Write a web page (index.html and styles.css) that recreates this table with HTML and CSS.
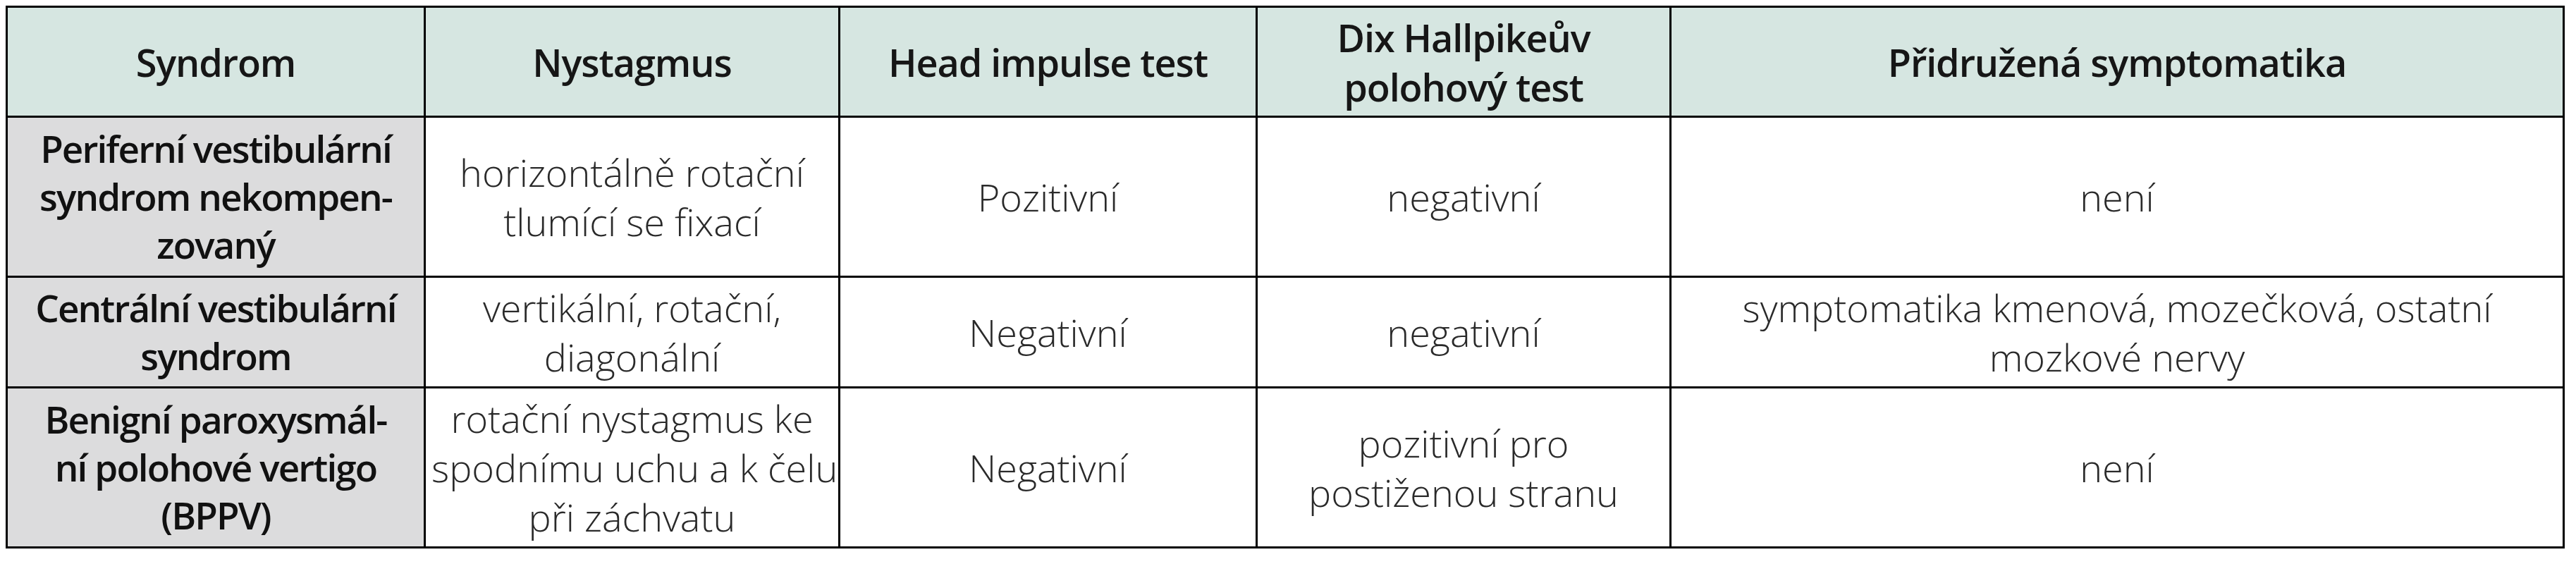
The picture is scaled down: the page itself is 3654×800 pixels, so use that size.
FILE: index.html
```html
<!DOCTYPE html>
<html lang="cs">
<head>
<meta charset="utf-8">
<title>Vestibulární syndromy</title>
<link rel="stylesheet" href="styles.css">
</head>
<body>
<table class="syndromes">
  <colgroup>
    <col class="c-syndrom">
    <col class="c-nyst">
    <col class="c-hit">
    <col class="c-dix">
    <col class="c-symp">
  </colgroup>
  <thead>
    <tr class="row-head">
      <th>Syndrom</th>
      <th>Nystagmus</th>
      <th>Head impulse test</th>
      <th>Dix Hallpikeův<br>polohový test</th>
      <th>Přidružená symptomatika</th>
    </tr>
  </thead>
  <tbody>
    <tr class="row-tall">
      <th class="rowhead">Periferní vestibulární<br>syndrom nekompen-<br>zovaný</th>
      <td>horizontálně rotační<br>tlumící se fixací</td>
      <td>Pozitivní</td>
      <td>negativní</td>
      <td>není</td>
    </tr>
    <tr class="row-short">
      <th class="rowhead">Centrální vestibulární<br>syndrom</th>
      <td>vertikální, rotační,<br>diagonální</td>
      <td>Negativní</td>
      <td>negativní</td>
      <td>symptomatika kmenová, mozečková, ostatní<br>mozkové nervy</td>
    </tr>
    <tr class="row-tall">
      <th class="rowhead">Benigní paroxysmál-<br>ní polohové vertigo<br>(BPPV)</th>
      <td>rotační nystagmus ke<br>spodnímu uchu a k čelu<br>při záchvatu</td>
      <td>Negativní</td>
      <td>pozitivní pro<br>postiženou stranu</td>
      <td>není</td>
    </tr>
  </tbody>
</table>
</body>
</html>
```

FILE: styles.css
```css
html, body {
  background: #ffffff;
}
body {
  margin: 8px;
  font-family: "Open Sans", "Noto Sans", "Liberation Sans", sans-serif;
}
.syndromes {
  border-collapse: collapse;
  table-layout: fixed;
  width: 3627px;
  border: 3px solid #000;
}
.c-syndrom { width: 593px; }
.c-nyst { width: 588px; }
.c-hit { width: 592px; }
.c-dix { width: 587px; }
.c-symp { width: 1267px; }

.syndromes th,
.syndromes td {
  border: 3px solid #000;
  padding: 0 8px;
  text-align: center;
  vertical-align: middle;
  white-space: nowrap;
  font-size: 54px;
  line-height: 70px;
  color: #1c1c1c;
}
.syndromes thead th {
  background: #d6e6e1;
  font-weight: 600;
  letter-spacing: -1.1px;
  color: #161616;
}
.syndromes .rowhead {
  background: #dcdcdd;
  font-weight: 600;
  font-size: 53px;
  letter-spacing: -1.9px;
  line-height: 68px;
  color: #111;
}
.syndromes td {
  font-weight: 300;
  color: #2a2a2a;
}
.row-head th { height: 153px; }
.row-tall th, .row-tall td { height: 224px; }
.row-short th, .row-short td { height: 154px; }
```
